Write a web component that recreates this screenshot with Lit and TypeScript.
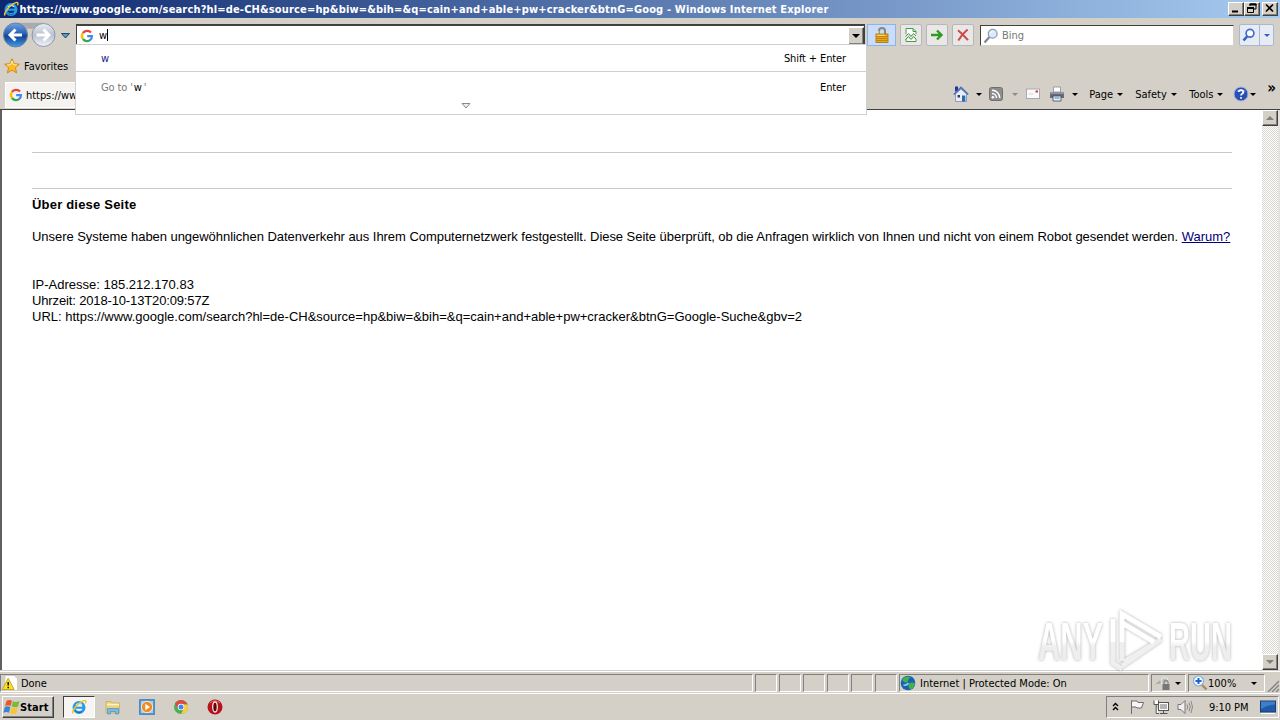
import { LitElement, html, svg, css } from 'lit';
import { customElement, property } from 'lit/decorators.js';
import { classMap } from 'lit/directives/class-map.js';

const PAGE_URL =
  'https://www.google.com/search?hl=de-CH&source=hp&biw=&bih=&q=cain+and+able+pw+cracker&btnG=Goog';

const icons = {
  ie: svg`
    <circle cx="8" cy="8.5" r="5" fill="none" stroke="#2a9be8" stroke-width="3"/>
    <path d="M4 8.7h9" stroke="#2a9be8" stroke-width="2.2"/>
    <path d="M5 6.2a4 4 0 0 1 6-.3" fill="none" stroke="#b4ecff" stroke-width="1.2"/>
    <path d="M4 11a4.500 4.500 0 0 0 7 1.500" fill="none" stroke="#1566b8" stroke-width="1"/>
    <path d="M2 14.5C.2 11.5 8 3 13 1.6c2.2-.6 2.3 1 1.4 2.7" fill="none" stroke="#f4c534" stroke-width="1.5"/>`,
  google: svg`
    <path d="M12.6 4A6 6 0 0 0 3.3 4.6" fill="none" stroke="#ea4335" stroke-width="2.6"/>
    <path d="M3.3 4.6a6 6 0 0 0 0 6.8" fill="none" stroke="#fbbc05" stroke-width="2.6"/>
    <path d="M3.3 11.4a6 6 0 0 0 8.6 1" fill="none" stroke="#34a853" stroke-width="2.6"/>
    <path d="M8.2 8.2h5.4c0 2-.7 3.4-1.9 4.4" fill="none" stroke="#4285f4" stroke-width="2.5"/>`,
  star: svg`<path d="M8 .8l2.1 4.9 5.3.5-4 3.5 1.2 5.2L8 12.1l-4.6 2.8 1.2-5.2-4-3.5 5.3-.5z" fill="#fdbb2a" stroke="#c98614" stroke-width=".9"/>
    <path d="M3 7.200l3.500-.6L8 3l1.300 3.600 3.500.4" fill="none" stroke="#fff0a8" stroke-width="1"/>`,
  lock: svg`
    <path d="M5 8V4a3 3 0 0 1 6 0V8" fill="none" stroke="#8b8778" stroke-width="2"/>
    <path d="M4.700 7V4" stroke="#eee" stroke-width=".8"/>
    <rect x="2" y="7" width="12" height="8.5" fill="#e9a81c" stroke="#a8700c" stroke-width=".8"/>
    <path d="M2.500 9.500h11M2.500 11.500h11M2.500 13.500h11" stroke="#b87a0c" stroke-width=".8"/>
    <path d="M3 8.300h8" stroke="#ffe07a" stroke-width="1"/>`,
  compat: svg`
    <path d="M3 7V1.500h7l3 3V7M3 12v2.500h10V12" fill="#fff" stroke="#4a9a4a" stroke-width="1"/>
    <path d="M10 1.500v3h3" fill="none" stroke="#4a9a4a"/>
    <path d="M2.500 9.500L5.500 6.500l2.500 3 2.500-3 2.500 2.500M2.500 12.500l3-3 2.500 3 2.500-3 2.500 2.500" fill="none" stroke="#3f9a3f" stroke-width="1"/>`,
  go: svg`<path d="M2 8h10M8 3.500L12.500 8 8 12.500" fill="none" stroke="#2f9a22" stroke-width="2.400"/>`,
  stop: svg`<path d="M3 3.200c3 2.500 6.500 6 10 10M12.600 2.500C9 5.500 5.500 9.500 3.300 13.500" fill="none" stroke="#cb4a4a" stroke-width="2"/>`,
  glass: svg`
    <path d="M1.500 14.500L6.500 9" stroke="#7d8794" stroke-width="2.200"/>
    <circle cx="9.700" cy="5.700" r="4.400" fill="#dcebfa" stroke="#8c9db3" stroke-width="1.300"/>
    <path d="M7.500 5a2.500 2.500 0 0 1 2.500-2" fill="none" stroke="#fff" stroke-width="1.200"/>`,
  search: svg`
    <path d="M2.500 13.500l4-4.500" stroke="#2f62c4" stroke-width="2.600"/>
    <circle cx="9" cy="6.300" r="3.900" fill="#fff" stroke="#3b70d0" stroke-width="1.700"/>`,
  home: svg`
    <path d="M2.500 8L8 3l5.500 5v7.500h-11z" fill="#e8eef8" stroke="#7a8bb0" stroke-width=".8"/>
    <path d="M2 .5h3v5H2z" fill="#27349c"/>
    <path d="M.8 8.500L8 1.500l7.200 7" fill="none" stroke="#4a72b8" stroke-width="1.700"/>
    <path d="M9 9.500h3.300v6H9z" fill="#2b6ca8"/>
    <path d="M4.500 9h2.500v2.500H4.500z" fill="#333b60"/>`,
  feed: svg`
    <rect x="1.500" y="1.500" width="13" height="13" rx="2" fill="#8d8d8d" stroke="#6f6f6f"/>
    <circle cx="4.900" cy="11.200" r="1.300" fill="#fff"/>
    <path d="M4 7.500a4.500 4.500 0 0 1 4.500 4.500M4 4.300A7.700 7.700 0 0 1 11.700 12" fill="none" stroke="#fff" stroke-width="1.400"/>`,
  mail: svg`
    <rect x="1.500" y="3" width="13" height="9.500" fill="#fafafa" stroke="#a9a9b5"/>
    <path d="M10.500 4.500h2.500v2h-2.500z" fill="#d03545"/><path d="M3.500 8h5" stroke="#d8d8e0"/>`,
  printer: svg`
    <path d="M4.500 1h7v5h-7z" fill="#fff" stroke="#8b8b95" stroke-width=".8"/>
    <path d="M1 6h14v6H1z" fill="#666b78"/><path d="M1 7h14" stroke="#b9bdc8"/>
    <path d="M4 10h8v5H4z" fill="#e8f0fa" stroke="#445" stroke-width=".8"/>
    <path d="M5.500 12h5" stroke="#3e82c4"/>`,
  help: svg`
    <circle cx="8" cy="8" r="7" fill="#2850b4" stroke="#a5b4d8"/>
    <path d="M3 5.500a5.500 4 0 0 1 10 0" fill="#6f93df"/>
    <path d="M5.700 6a2.300 2 0 1 1 3.200 1.900Q8 8.400 8 9.500M8 11v1.700" fill="none" stroke="#fff" stroke-width="1.700"/>`,
  warning: svg`
    <path d="M3 .5h9l3.500 3V15.500H3z" fill="#fff" stroke="#c4c4bc" stroke-width=".7"/>
    <path d="M6.200 3.300l6 11.200H.3z" fill="#ffdf21" stroke="#b99a0a" stroke-width=".8"/>
    <path d="M6.200 7v3.600M6.200 11.700v1.500" stroke="#111" stroke-width="1.500"/>`,
  globe: svg`
    <circle cx="8" cy="8" r="7.300" fill="#1762b5"/>
    <path d="M2 5C4 1.500 8 .8 10.500 2 9 4 8 5 7.500 7 5 8.500 4 7 2 5zM9 8.500c2-1.500 4-1 6-.5-.2 3.500-2 5.500-4.500 6.500C8 12 8 10 9 8.500z" fill="#46b048"/>
    <path d="M3.500 10c2 .5 4-.5 5-2" fill="none" stroke="#8ed0f0" stroke-width="1.500"/>`,
  privacy: svg`
    <path d="M0 9.500L9 2v5.500z" fill="#a6a6a6"/>
    <circle cx="9.500" cy="6" r="3.600" fill="#c4c4c4" stroke="#eee"/>
    <rect x="7.500" y="9" width="7" height="6" fill="#777"/>
    <path d="M9 9V7.500a2 2 0 0 1 4 0V9" fill="none" stroke="#888" stroke-width="1.300"/>`,
  zoom: svg`
    <path d="M10 10l4.500 4.500" stroke="#b38b52" stroke-width="2.400"/>
    <circle cx="6.500" cy="6" r="5" fill="#f4faff" stroke="#86aedd" stroke-width="1.200"/>
    <path d="M6.500 3v6M3.500 6h6" stroke="#1f66c4" stroke-width="2"/>`,
  windows: svg`
    <path d="M2.500 2C4.500.5 6 .8 8 1.700L6.700 7C4.800 6 3.200 6.100 1 7.200z" fill="#e8562a"/>
    <path d="M8.900 2.200c1.900.9 4 1 6.600-.2L14 7.500c-2 1.200-4.200 1-6.400.1z" fill="#7cb83a"/>
    <path d="M.7 8.200c2-1.200 3.700-1.100 5.600-.1L5 13.800c-1.800-1-3.700-1-5.700.1z" fill="#3a83d4"/>
    <path d="M7.300 8.600c1.800.9 4 1 6.400-.2l-1.400 5.600c-2 1.200-4.200 1-6.400.1z" fill="#f8c62c"/>`,
  folder: svg`
    <path d="M1 2.500h5l1 1.500h7.500V14H1z" fill="#ecd27a" stroke="#c8a850" stroke-width=".7"/>
    <path d="M2 5.500h12" stroke="#fff7cc" stroke-width="1.500"/>
    <path d="M2.500 15V9.500h11V15h-3v-2.500h-5V15z" fill="#79b9e6" stroke="#4a8fc4" stroke-width=".7"/>`,
  media: svg`
    <rect x=".7" y=".7" width="14.600" height="14.600" fill="#5d9fd8" stroke="#3b7cba"/>
    <path d="M2 2h12v12H2z" fill="#a4cdf0"/>
    <circle cx="8" cy="8" r="5.600" fill="#f28a1c" stroke="#fff" stroke-width=".7"/>
    <path d="M6.300 4.800L11 8l-4.700 3.200z" fill="#fff"/>`,
  chrome: svg`
    <circle cx="8" cy="8" r="7" fill="#4caf50"/>
    <path d="M1.900 4.500a7 7 0 0 1 12.200 0L14.500 5.500H8L5 9.500z" fill="#dd4b3e"/>
    <path d="M14.500 5.400A7 7 0 0 1 8 15l3.200-6L8 5.400z" fill="#fccd3c"/>
    <circle cx="8" cy="8" r="3.300" fill="#fff"/><circle cx="8" cy="8" r="2.500" fill="#4285f4"/>`,
  opera: svg`
    <circle cx="8" cy="8" r="7.500" fill="#b5121b"/>
    <path d="M3 4a6.500 6 0 0 1 10 0" stroke="#e56a6a" fill="none"/>
    <ellipse cx="8" cy="8" rx="2.300" ry="5" fill="#5c0509" stroke="#f4dede" stroke-width="1.300"/>`,
  flag: svg`<path d="M2.500 15V1.500M2.500 2h5.500l1 1.500h5.500L12.500 9H8L7 8H2.500" fill="#f6f6f6" stroke="#6d6d6d" stroke-width="1"/>`,
  network: svg`
    <rect x="5.500" y="3.500" width="10" height="8" fill="#b4b4b4" stroke="#555"/>
    <path d="M6.500 4.500h8v6h-8z" fill="none" stroke="#fff"/>
    <path d="M7 14.500h7.500M10.500 12v2" stroke="#555"/>
    <path d="M1 1.500v4h4.500v-4M3.200 6v8.500H6" fill="#fff" stroke="#555"/>`,
  sound: svg`
    <path d="M1 5.500h3L8 1.500v13L4 10.500H1z" fill="#f0f0f0" stroke="#777"/>
    <path d="M10 5.500q1.500 2.500 0 5M12 3.700q2.700 4.300 0 8.600M14 2q3 6 0 12" fill="none" stroke="#8b8b8b"/>`,
  desktop: svg`
    <rect x=".5" y="2" width="15" height="11" fill="#1f5aa8" stroke="#173d78"/>
    <path d="M1 2.500h14v3Q7 6 1 10z" fill="#3f7fc8"/><path d="M1 14.500h14" stroke="#fff"/>`,
};

type IconName = keyof typeof icons;

@customElement('ie-icon')
export class IeIcon extends LitElement {
  @property({ type: String }) public name: IconName = 'ie';

  protected render() {
    return html`<svg viewBox="0 0 16 16">${icons[this.name]}</svg>`;
  }

  static get styles() {
    return css`
      :host {
        display: block;
        flex: none;
        width: 16px;
        height: 16px;
      }

      svg {
        display: block;
        width: 100%;
        height: 100%;
        overflow: visible;
      }
    `;
  }
}

@customElement('ie-arrow')
export class IeArrow extends LitElement {
  protected render() {
    return html``;
  }

  static get styles() {
    return css`
      :host {
        display: block;
        flex: none;
        width: 0;
        height: 0;
        border: 3px solid transparent;
        border-top-color: currentColor;
        border-bottom: 0;
      }
    `;
  }
}

@customElement('title-bar')
export class TitleBar extends LitElement {
  protected render() {
    return html`
      <ie-icon name="ie"></ie-icon>
      <span class="title">${PAGE_URL} - Windows Internet Explorer</span>
      <div class="buttons">
        <div class="button"><svg viewBox="0 0 13 11"><path d="M3 8.500h6" stroke="#000" stroke-width="2"/></svg></div>
        <div class="button">
          <svg viewBox="0 0 13 11">
            <path d="M5 3V1h6v5H9" fill="none" stroke="#000"/><path d="M4.500 1.500h7" stroke="#000" stroke-width="2"/>
            <path d="M2.500 5.500h6v4h-6z" fill="none" stroke="#000"/><path d="M2 5h7" stroke="#000" stroke-width="2"/>
          </svg>
        </div>
        <div class="button close"><svg viewBox="0 0 13 11"><path d="M3 1.500l7 7M10 1.500l-7 7" stroke="#000" stroke-width="1.700"/></svg></div>
      </div>
    `;
  }

  static get styles() {
    return css`
      :host {
        display: flex;
        align-items: center;
        box-sizing: border-box;
        height: 18px;
        padding: 0 2px 0 3px;
        background: linear-gradient(90deg, #0d286e, #a6caf0);
      }

      .title {
        flex: 1;
        padding: 1px 0 0 0.5px;
        font: bold 11px/17px 'DejaVu Sans Condensed', 'DejaVu Sans', sans-serif;
        letter-spacing: 0.161px;
        color: #fff;
        white-space: nowrap;
      }

      .buttons {
        display: flex;
      }

      .button {
        box-sizing: border-box;
        width: 16px;
        height: 14px;
        background: #d4d0c8;
        border: 1px solid;
        border-color: #fff #404040 #404040 #fff;
        box-shadow: inset -1px -1px #808080;
      }

      .close {
        margin-left: 2px;
      }

      .button svg {
        display: block;
        width: 13px;
        height: 11px;
      }
    `;
  }
}

@customElement('address-dropdown')
export class AddressDropdown extends LitElement {
  protected render() {
    return html`
      <div class="row first"><span class="match">w</span><span>Shift + Enter</span></div>
      <div class="row"><span class="hint">Go to '<b>w</b>'</span><span>Enter</span></div>
      <div class="more"><svg viewBox="0 0 10 6"><path d="M1 .5h8L5 5z" fill="#eee" stroke="#8a8a8a"/></svg></div>
    `;
  }

  static get styles() {
    return css`
      :host {
        display: block;
        box-sizing: border-box;
        width: 792px;
        height: 71px;
        background: #fff;
        border: 1px solid #d0d0d0;
        font: 11px 'DejaVu Sans Condensed', 'DejaVu Sans', sans-serif;
        letter-spacing: -0.12px;
      }

      .row {
        display: flex;
        justify-content: space-between;
        align-items: center;
        height: 28px;
        padding: 2px 20px 0 25px;
        box-sizing: border-box;
      }

      .first {
        height: 27px;
        padding-top: 0;
        border-bottom: 1px solid #d0d0d0;
      }

      .match {
        color: #1a1a8c;
      }

      .hint {
        color: #7a7a7a;
      }

      .hint b {
        margin: 0 2px 0 1px;
        font-weight: normal;
        color: #000;
      }

      .more {
        display: flex;
        justify-content: center;
        padding: 3px 10px 0 0;
      }

      .more svg {
        width: 10px;
        height: 6px;
      }
    `;
  }
}

@customElement('browser-chrome')
export class BrowserChrome extends LitElement {
  protected render() {
    return html`
      <div class="nav">
        <svg class="travel" viewBox="0 0 72 26">
          <defs>
            <linearGradient id="back" x2="0" y2="1">
              <stop offset="0" stop-color="#6fa4e2"/><stop offset=".45" stop-color="#2560b8"/>
              <stop offset=".55" stop-color="#134194"/><stop offset="1" stop-color="#3fa0ea"/>
            </linearGradient>
            <linearGradient id="fwd" x2="0" y2="1">
              <stop offset="0" stop-color="#e9eef5"/><stop offset=".5" stop-color="#b9c1cf"/><stop offset="1" stop-color="#f0f5fb"/>
            </linearGradient>
          </defs>
          <path d="M15 .8h28l-6 6H21z" fill="#a9abb3"/>
          <circle cx="15.500" cy="13" r="12" fill="url(#back)" stroke="#6f7f9c"/>
          <path d="M22 13H10.500M15.500 7.500L10 13l5.500 5.500" fill="none" stroke="#fff" stroke-width="3"/>
          <circle cx="43.500" cy="13" r="11.500" fill="url(#fwd)" stroke="#8d96a6"/>
          <path d="M36.500 13h12M43.500 7.500L49 13l-5.500 5.500" fill="none" stroke="#fff" stroke-width="3"/>
          <path d="M61.500 11.500h8L65.500 16z" fill="#4fa0c0" stroke="#23466e"/>
        </svg>
        <div class="address">
          <ie-icon class="site" name="google"></ie-icon>
          <span class="typed">w</span>
          <span class="drop"><ie-arrow></ie-arrow></span>
          <address-dropdown class="suggestions"></address-dropdown>
        </div>
        <div class="secure"><ie-icon name="lock"></ie-icon></div>
        <div class="tool"><ie-icon name="compat"></ie-icon></div>
        <div class="tool"><ie-icon name="go"></ie-icon></div>
        <div class="tool"><ie-icon name="stop"></ie-icon></div>
        <div class="search"><ie-icon name="glass"></ie-icon><span>Bing</span></div>
        <div class="find">
          <ie-icon name="search"></ie-icon>
          <span class="find-drop"><ie-arrow></ie-arrow></span>
        </div>
      </div>
      <div class="favorites"><ie-icon name="star"></ie-icon><span>Favorites</span></div>
      <div class="tabs">
        <div class="tab"><ie-icon class="tab-icon" name="google"></ie-icon><span>https://ww</span></div>
        <div class="commands">
          <ie-icon name="home"></ie-icon><ie-arrow class="a1"></ie-arrow>
          <ie-icon name="feed"></ie-icon><ie-arrow class="a2"></ie-arrow>
          <ie-icon name="mail"></ie-icon>
          <ie-icon class="print" name="printer"></ie-icon><ie-arrow class="a3"></ie-arrow>
          <span class="menu page">Page<ie-arrow></ie-arrow></span>
          <span class="menu safety">Safety<ie-arrow></ie-arrow></span>
          <span class="menu tools">Tools<ie-arrow></ie-arrow></span>
          <ie-icon name="help"></ie-icon><ie-arrow class="a4"></ie-arrow>
          <span class="overflow">»</span>
        </div>
      </div>
    `;
  }

  static get styles() {
    return css`
      :host {
        display: flex;
        flex-direction: column;
        box-sizing: border-box;
        height: 92px;
        background: #d4d0c8;
        font: 11px 'DejaVu Sans Condensed', 'DejaVu Sans', sans-serif;
        letter-spacing: -0.05px;
        color: #000;
      }

      .nav {
        display: flex;
        align-items: flex-start;
        height: 37px;
        padding: 6px 6px 0 0;
        box-sizing: border-box;
      }

      .travel {
        width: 72px;
        height: 26px;
        margin: -2px 4px 0 0;
      }

      .address {
        position: relative;
        display: flex;
        align-items: center;
        box-sizing: border-box;
        width: 789px;
        height: 21px;
        background: #fff;
        border: solid #404040;
        border-width: 2px 1px 0;
        z-index: 2;
      }

      .site {
        width: 14px;
        height: 14px;
        margin: 0 5px 0 3px;
      }

      .typed {
        flex: 1;
        line-height: 13px;
      }

      .typed::after {
        content: '';
        display: inline-block;
        width: 1px;
        height: 12px;
        background: #000;
        vertical-align: -2px;
      }

      .drop {
        display: flex;
        align-items: center;
        justify-content: center;
        box-sizing: border-box;
        width: 16px;
        height: 18px;
        background: #d4d0c8;
        border: 1px solid;
        border-color: #fff #404040 #404040 #fff;
        box-shadow: inset -1px -1px #808080;
      }

      .drop ie-arrow {
        border-width: 4px 4px 0;
      }

      .suggestions {
        position: absolute;
        top: 18px;
        left: -2px;
      }

      .secure {
        display: flex;
        align-items: center;
        justify-content: center;
        box-sizing: border-box;
        width: 29px;
        height: 22px;
        margin: 0 4px 0 2px;
        background: #c9dcf8;
        border: 1px solid #8eb2ea;
      }

      .tool {
        display: flex;
        align-items: center;
        justify-content: center;
        box-sizing: border-box;
        width: 22px;
        height: 22px;
        margin-right: 4px;
        background: #e9e8e6;
        border: 1px solid #b3b7c2;
        border-radius: 2px;
      }

      .search {
        display: flex;
        align-items: center;
        gap: 3px;
        flex: 1;
        box-sizing: border-box;
        height: 21px;
        margin: 1px 5px 0 2px;
        padding-left: 2px;
        background: #fff;
        border: 1px solid;
        border-color: #404040 #d4d0c8 #d4d0c8 #404040;
        color: #777;
      }

      .find {
        display: flex;
        align-items: center;
        box-sizing: border-box;
        width: 35px;
        height: 22px;
        padding-left: 1px;
        background: #e6ebf4;
        border: 1px solid #a9b8d0;
        border-radius: 2px;
        color: #2f62c4;
      }

      .find-drop {
        display: flex;
        align-items: center;
        justify-content: center;
        flex: 1;
        height: 100%;
        margin-left: 2px;
        border-left: 1px solid #a9b8d0;
      }

      .favorites {
        display: flex;
        align-items: center;
        gap: 4px;
        height: 22px;
        padding-left: 4px;
      }

      .tabs {
        display: flex;
        justify-content: space-between;
        flex: 1;
        padding-left: 5px;
        border-bottom: 1px solid #404040;
      }

      .tab {
        display: flex;
        align-items: center;
        box-sizing: border-box;
        width: 190px;
        height: 26px;
        margin-top: 5px;
        padding-left: 3px;
        background: #f4f3f0;
        border: 1px solid #fff;
        overflow: hidden;
      }

      .tab-icon {
        width: 14px;
        height: 14px;
        margin-right: 3px;
      }

      .commands {
        display: flex;
        align-items: center;
        height: 26px;
        margin-top: 4px;
        padding-right: 4px;
      }

      .a1 {
        margin: 0 6px 0 7px;
      }

      .a2 {
        margin: 0 7px 0 8px;
        color: #8b8b8b;
      }

      .print {
        margin-left: 8px;
      }

      .a3 {
        margin: 0 11px 0 7px;
      }

      .menu {
        display: flex;
        align-items: center;
        justify-content: space-between;
      }

      .page {
        width: 34px;
        margin-right: 12px;
      }

      .safety {
        width: 42px;
        margin-right: 12px;
      }

      .tools {
        width: 34px;
        margin-right: 10px;
      }

      .a4 {
        margin: 0 11px 0 1px;
      }

      .overflow {
        align-self: flex-start;
        font-size: 15px;
        font-weight: bold;
        line-height: 14px;
      }
    `;
  }
}

@customElement('page-view')
export class PageView extends LitElement {
  protected render() {
    return html`
      <div class="document">
        <div class="rule"></div>
        <div class="rule second"></div>
        <div class="heading">Über diese Seite</div>
        <div class="text">
          <span class="long">Unsere Systeme haben ungewöhnlichen Datenverkehr aus Ihrem Computernetzwerk festgestellt. Diese Seite überprüft, ob die Anfragen wirklich von Ihnen und nicht von einem Robot gesendet werden.</span>
          <a class="why">Warum?</a>
        </div>
        <div>IP-Adresse: 185.212.170.83</div>
        <div class="time">Uhrzeit: 2018-10-13T20:09:57Z</div>
        <div>URL: https://www.google.com/search?hl=de-CH&amp;source=hp&amp;biw=&amp;bih=&amp;q=cain+and+able+pw+cracker&amp;btnG=Google-Suche&amp;gbv=2</div>
      </div>
      <div class="scrollbar">
        <div class="step up"><ie-arrow></ie-arrow></div>
        <div class="step"><ie-arrow></ie-arrow></div>
      </div>
      <svg class="watermark" viewBox="0 0 200 64">
        <defs>
          <linearGradient id="fade" x2="0" y2="1">
            <stop offset=".5" stop-color="#fff"/><stop offset=".6" stop-color="#eee"/>
          </linearGradient>
        </defs>
        <g class="mark">
          <text x="2" y="52" textLength="65" lengthAdjust="spacingAndGlyphs">ANY</text>
          <text x="133" y="52" textLength="63" lengthAdjust="spacingAndGlyphs">RUN</text>
          <path class="frame shade" d="M77 34V55l9 6M86 34V53M125 31L86 58M118 36L88 54"/>
          <path class="frame" d="M77 34V11M86 34V6l39 23M86 15l32 19"/>
        </g>
      </svg>
    `;
  }

  static get styles() {
    return css`
      :host {
        position: relative;
        display: flex;
        box-sizing: border-box;
        height: 560px;
        background: #fff;
        border-left: 2px solid #606060;
        border-right: 2px solid #e4e2dc;
        font: 13px/16px 'Liberation Sans', Arial, sans-serif;
        color: #000;
      }

      .document {
        flex: 1;
        min-width: 0;
        padding: 42px 30px 0;
        white-space: nowrap;
      }

      .rule {
        height: 1px;
        background: #c8c8c8;
      }

      .second {
        margin: 35px 0 8px;
      }

      .heading {
        font-weight: bold;
        letter-spacing: 0.2px;
      }

      .text {
        margin: 16px 0 32px;
      }

      .long {
        letter-spacing: -0.046px;
      }

      .time {
        letter-spacing: -0.14px;
      }

      .why {
        color: #00007a;
        text-decoration: underline;
      }

      .scrollbar {
        display: flex;
        flex: none;
        flex-direction: column;
        justify-content: space-between;
        width: 16px;
        background: repeating-conic-gradient(#fff 0 25%, #d9d6cf 0 50%) 0 0 / 2px 2px;
      }

      .step {
        display: flex;
        align-items: center;
        justify-content: center;
        box-sizing: border-box;
        height: 16px;
        background: #d4d0c8;
        border: 1px solid;
        border-color: #fff #404040 #404040 #fff;
        box-shadow: inset -1px -1px #808080;
        color: #808080;
      }

      .step ie-arrow {
        border-width: 4px 4px 0;
      }

      .up ie-arrow {
        transform: rotate(180deg);
      }

      .watermark {
        position: absolute;
        right: 42px;
        bottom: -2px;
        width: 200px;
        height: 64px;
        overflow: visible;
      }

      .mark {
        fill: url(#fade);
        filter: drop-shadow(0 0 1.5px rgba(0, 0, 0, 0.32));
        font: bold 54px 'Liberation Sans Narrow', 'Liberation Sans', sans-serif;
      }

      .frame {
        fill: none;
        stroke: #fff;
        stroke-width: 5;
      }

      .shade {
        stroke: #efefef;
      }
    `;
  }
}

@customElement('status-bar')
export class StatusBar extends LitElement {
  protected render() {
    return html`
      <div class="pane done"><ie-icon name="warning"></ie-icon>Done</div>
      ${Array.from({ length: 6 }, () => html`<div class="pane blank"></div>`)}
      <div class="pane zone"><ie-icon name="globe"></ie-icon>Internet | Protected Mode: On</div>
      <div class="pane filter"><ie-icon name="privacy"></ie-icon><ie-arrow></ie-arrow></div>
      <div class="pane zoom"><ie-icon name="zoom"></ie-icon><span>100%</span><ie-arrow></ie-arrow></div>
      <svg class="grip" viewBox="0 0 12 12"><path d="M1 12L12 1M5 12l7-7M9 12l3-3" stroke="#808080" stroke-width="1.300"/></svg>
    `;
  }

  static get styles() {
    return css`
      :host {
        display: flex;
        box-sizing: border-box;
        height: 23px;
        padding: 3px 0 1px;
        background: #d4d0c8;
        border-top: 1px solid #d4d0c8;
        box-shadow: inset 0 1px #fff;
        font: 11px 'DejaVu Sans Condensed', 'DejaVu Sans', sans-serif;
      }

      .pane {
        display: flex;
        align-items: center;
        box-sizing: border-box;
        margin-right: 2px;
        border: 1px solid;
        border-color: #808080 #fff #fff #808080;
      }

      .done {
        width: 753px;
        gap: 3px;
        padding-left: 1px;
        letter-spacing: -0.1px;
      }

      .blank {
        width: 22px;
      }

      .zone {
        width: 250px;
        gap: 4px;
      }

      .filter {
        width: 35px;
        justify-content: space-between;
        padding: 0 4px 0 3px;
      }

      .zoom {
        width: 77px;
        padding-left: 3px;
      }

      .zoom ie-arrow {
        margin-left: 15px;
      }

      .grip {
        align-self: flex-end;
        width: 12px;
        height: 12px;
      }
    `;
  }
}

@customElement('task-bar')
export class TaskBar extends LitElement {
  private _apps: IconName[] = ['ie', 'folder', 'media', 'chrome', 'opera'];

  protected render() {
    return html`
      <div class="start"><ie-icon name="windows"></ie-icon>Start</div>
      ${this._apps.map(
        (app) => html`<div class=${classMap({ app: true, active: app === 'ie' })}><ie-icon name=${app}></ie-icon></div>`
      )}
      <div class="tray">
        <svg class="chevrons" viewBox="0 0 7 9"><path d="M1 4l2.500-2.500L6 4M1 8l2.500-2.500L6 8" fill="none" stroke="#000" stroke-width="1.400"/></svg>
        <ie-icon name="flag"></ie-icon>
        <ie-icon name="network"></ie-icon>
        <ie-icon name="sound"></ie-icon>
        <span class="clock">9:10 PM</span>
        <ie-icon name="desktop"></ie-icon>
      </div>
    `;
  }

  static get styles() {
    return css`
      :host {
        display: flex;
        align-items: center;
        box-sizing: border-box;
        height: 27px;
        padding: 0 1px 0 2px;
        background: #d4d0c8;
        border-top: 1px solid #fff;
        font: 11px 'DejaVu Sans Condensed', 'DejaVu Sans', sans-serif;
        letter-spacing: -0.05px;
      }

      .start {
        display: flex;
        align-items: center;
        box-sizing: border-box;
        width: 52px;
        height: 22px;
        margin-right: 9px;
        padding-left: 1px;
        border: 1px solid;
        border-color: #fff #404040 #404040 #fff;
        box-shadow: inset -1px -1px #808080;
        font-weight: bold;
        letter-spacing: 0.1px;
      }

      .app {
        display: flex;
        align-items: center;
        justify-content: center;
        box-sizing: border-box;
        width: 32px;
        height: 22px;
        margin-right: 2px;
      }

      .active {
        background: #f6f5f3;
        border: 1px solid;
        border-color: #404040 #fff #fff #404040;
      }

      .tray {
        display: flex;
        align-items: center;
        box-sizing: border-box;
        width: 173px;
        height: 22px;
        margin-left: auto;
        padding-left: 5px;
        border: 1px solid;
        border-color: #808080 #fff #fff #808080;
      }

      .chevrons {
        width: 7px;
        height: 9px;
        margin: -2px 2px 0 0;
      }

      .tray ie-icon {
        margin-left: 8px;
      }

      .clock {
        width: 42px;
        margin: 0 1px 0 16px;
        white-space: nowrap;
      }
    `;
  }
}

@customElement('app-root')
export class AppRoot extends LitElement {
  protected render() {
    return html`
      <title-bar></title-bar>
      <browser-chrome></browser-chrome>
      <page-view></page-view>
      <status-bar></status-bar>
      <task-bar></task-bar>
    `;
  }

  static get styles() {
    return css`
      :host {
        display: flex;
        flex-direction: column;
        width: 1280px;
        height: 720px;
        overflow: hidden;
        background: #d4d0c8;
      }

      browser-chrome {
        position: relative;
        z-index: 1;
      }
    `;
  }
}
